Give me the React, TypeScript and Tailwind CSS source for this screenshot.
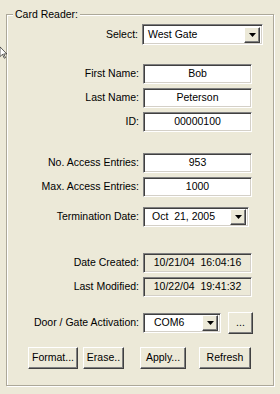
import React from "react";

const font = { fontFamily: '"Liberation Sans", Arial, sans-serif' };

const sunken =
  "border border-t-[#808080] border-l-[#808080] border-b-white border-r-white shadow-[inset_1px_1px_0_#404040,inset_-1px_-1px_0_#d4d0c8]";
const raised =
  "border border-t-white border-l-white border-b-[#404040] border-r-[#404040] shadow-[inset_-1px_-1px_0_#808080,inset_1px_1px_0_#ece9d8] bg-[#ece9d8]";

const Arrow = () => (
  <svg width="7" height="4" viewBox="0 0 7 4">
    <polygon points="0,0 7,0 3.5,4" fill="#000" />
  </svg>
);

const DropBtn = () => (
  <div className={`w-[16px] h-[16px] flex items-center justify-center ${raised}`}>
    <Arrow />
  </div>
);

const Label = ({ text, w = 136 }: { text: string; w?: number }) => (
  <div className="text-right pr-[4px]" style={{ width: w }}>
    {text}
  </div>
);

const Field = ({ value, readOnly }: { value: string; readOnly?: boolean }) => (
  <div
    className={`w-[109px] h-[20px] flex items-center justify-center whitespace-pre ${sunken} ${
      readOnly ? "bg-[#ece9d8]" : "bg-white"
    }`}
  >
    {value}
  </div>
);

const Row = ({ mt, children }: { mt: string; children: React.ReactNode }) => (
  <div className={`flex items-center ${mt}`}>{children}</div>
);

const Btn = ({ text, w }: { text: string; w: string }) => (
  <div className={`${w} h-[22px] flex items-center justify-center ${raised}`}>{text}</div>
);

export default function App() {
  return (
    <div className="w-[280px] h-[394px] bg-[#ece9d8] relative overflow-hidden text-[10.5px] text-black" style={font}>
      <div className="pt-[14px] pl-[6px]">
        <div className="relative w-[268px] h-[372px] border border-[#aca899] shadow-[inset_1px_1px_0_white,1px_1px_0_white]">
          <div className="absolute left-[6px] -top-[8px] px-[2px] bg-[#ece9d8] leading-[14px]">Card Reader:</div>

          <div className="flex flex-col">
            <Row mt="mt-[9px]">
              <Label text="Select:" w={135} />
              <div className={`w-[121px] h-[21px] flex items-center bg-white pl-[5px] pr-[2px] ${sunken}`}>
                <span className="flex-1">West Gate</span>
                <DropBtn />
              </div>
            </Row>

            <Row mt="mt-[19px]">
              <Label text="First Name:" />
              <Field value="Bob" />
            </Row>
            <Row mt="mt-[4px]">
              <Label text="Last Name:" />
              <Field value="Peterson" />
            </Row>
            <Row mt="mt-[4px]">
              <Label text="ID:" />
              <Field value="00000100" />
            </Row>

            <Row mt="mt-[21px]">
              <Label text="No. Access Entries:" />
              <Field value="953" />
            </Row>
            <Row mt="mt-[4px]">
              <Label text="Max. Access Entries:" />
              <Field value="1000" />
            </Row>

            <Row mt="mt-[10px]">
              <Label text="Termination Date:" />
              <div className={`w-[106px] h-[20px] flex items-center bg-white pl-[8px] pr-[2px] ${sunken}`}>
                <span className="flex-1 whitespace-pre">Oct  21, 2005</span>
                <DropBtn />
              </div>
            </Row>

            <Row mt="mt-[26px]">
              <Label text="Date Created:" />
              <Field value="10/21/04  16:04:16" readOnly />
            </Row>
            <Row mt="mt-[4px]">
              <Label text="Last Modified:" />
              <Field value="10/22/04  19:41:32" readOnly />
            </Row>

            <Row mt="mt-[15px]">
              <Label text="Door / Gate Activation:" />
              <div className={`w-[78px] h-[20px] flex items-center bg-white pl-[10px] pr-[2px] ${sunken}`}>
                <span className="flex-1">COM6</span>
                <DropBtn />
              </div>
              <div className="ml-[7px]">
                <Btn text="..." w="w-[25px]" />
              </div>
            </Row>

            <div className="flex items-center mt-[13px] pl-[21px]">
              <Btn text="Format..." w="w-[50px]" />
              <div className="ml-[5px]">
                <Btn text="Erase.." w="w-[41px]" />
              </div>
              <div className="ml-[16px]">
                <Btn text="Apply..." w="w-[46px]" />
              </div>
              <div className="ml-[13px]">
                <Btn text="Refresh" w="w-[52px]" />
              </div>
            </div>
          </div>
        </div>
      </div>

      <svg className="absolute left-0 top-[43px]" width="8" height="20" viewBox="-5 0 13 20">
        <polygon
          points="-5,0 -5,16 -1,12 2,18.5 4,17.5 1,11.5 6,11.5"
          fill="#fff"
          stroke="#000"
          strokeWidth="1"
        />
      </svg>
    </div>
  );
}
